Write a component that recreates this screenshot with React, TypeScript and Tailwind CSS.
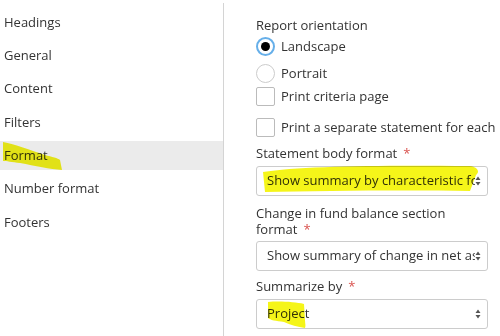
import React from 'react';

const navItems = ['Headings', 'General', 'Content', 'Filters', 'Format', 'Number format', 'Footers'];

const Required = () => <span className="ml-[6px] text-[#d9534f]">*</span>;

const Select = ({ value }: { value: string }) => (
  <div className="flex h-[30px] w-[232px] items-center rounded-[3px] border border-[#ccc] bg-white pl-[10px] pr-[6px]">
    <span className="flex-1 overflow-hidden whitespace-nowrap">{value}</span>
    <svg width="6" height="10" viewBox="0 0 6 10" className="shrink-0">
      <path d="M3 0.5L5.5 4H0.5Z M3 9.5L0.5 6H5.5Z" fill="#555" />
    </svg>
  </div>
);

const Checkbox = ({ label }: { label: string }) => (
  <div className="flex items-center gap-[6px]">
    <span className="h-[19px] w-[19px] shrink-0 rounded-[2px] border border-[#bbb] bg-white" />
    <span className="whitespace-nowrap">{label}</span>
  </div>
);

const App = () => {
  return (
    <div
      className="relative flex h-[336px] w-[500px] overflow-hidden bg-white text-[13px] text-[#333]"
      style={{ fontFamily: '"Open Sans", "Noto Sans", sans-serif' }}
    >
      <aside className="w-[224px] shrink-0 pt-[3px]">
        <div className="h-full border-r border-[#d4d4d4] pt-[5px]">
          <ul className="flex flex-col gap-[4.3px]">
            {navItems.map((item) => (
              <li
                key={item}
                className={`flex h-[29px] items-center pl-[4px] ${item === 'Format' ? 'bg-[#ebebeb]' : ''}`}
              >
                {item}
              </li>
            ))}
          </ul>
        </div>
      </aside>

      <main className="flex flex-col pl-[32px] pt-[16px]">
        <div className="leading-[18px]">Report orientation</div>
        <div className="mt-[3px] flex items-center gap-[6px]">
          <span className="flex h-[19px] w-[19px] items-center justify-center rounded-full border-2 border-[#66afe9] bg-white">
            <span className="h-[9px] w-[9px] rounded-full bg-black" />
          </span>
          <span>Landscape</span>
        </div>
        <div className="mt-[7px] flex items-center gap-[6px]">
          <span className="h-[19px] w-[19px] rounded-full border border-[#ccc] bg-white" />
          <span>Portrait</span>
        </div>
        <div className="mt-[4px]">
          <Checkbox label="Print criteria page" />
        </div>
        <div className="mt-[11px]">
          <Checkbox label="Print a separate statement for each" />
        </div>
        <div className="mt-[7px] leading-[18px]">
          Statement body format
          <Required />
        </div>
        <div className="mt-[4px]">
          <Select value="Show summary by characteristic format" />
        </div>
        <div className="mt-[9px] w-[232px] leading-[16px]">
          Change in fund balance section format
          <Required />
        </div>
        <div className="mt-[4px]">
          <Select value="Show summary of change in net assets" />
        </div>
        <div className="mt-[6px] leading-[18px]">
          Summarize by
          <Required />
        </div>
        <div className="mt-[4px]">
          <Select value="Project" />
        </div>
      </main>

      {/* highlighter marks drawn over the screenshot */}
      <svg
        className="pointer-events-none absolute left-0 top-0 mix-blend-multiply"
        width="500"
        height="336"
        viewBox="0 0 500 336"
      >
        <g fill="#f4f400" fillOpacity="0.9">
          <path d="M3 142 C15 144 30 150 45 155 C52 157 58 158 60 160 L62 170 C50 169 35 166 20 163 C12 162 6 161 3 161 Z" />
          <path d="M263 172 C300 166 380 165 470 166 C478 167 480 172 476 175 L470 191 C400 190 320 191 265 192 Z" />
          <path d="M268 302 C280 301 295 302 304 304 L305 320 C305 323 306 326 305 328 C298 327 290 325 284 322 C276 321 270 320 268 318 Z" />
        </g>
      </svg>
    </div>
  );
};

export default App;
